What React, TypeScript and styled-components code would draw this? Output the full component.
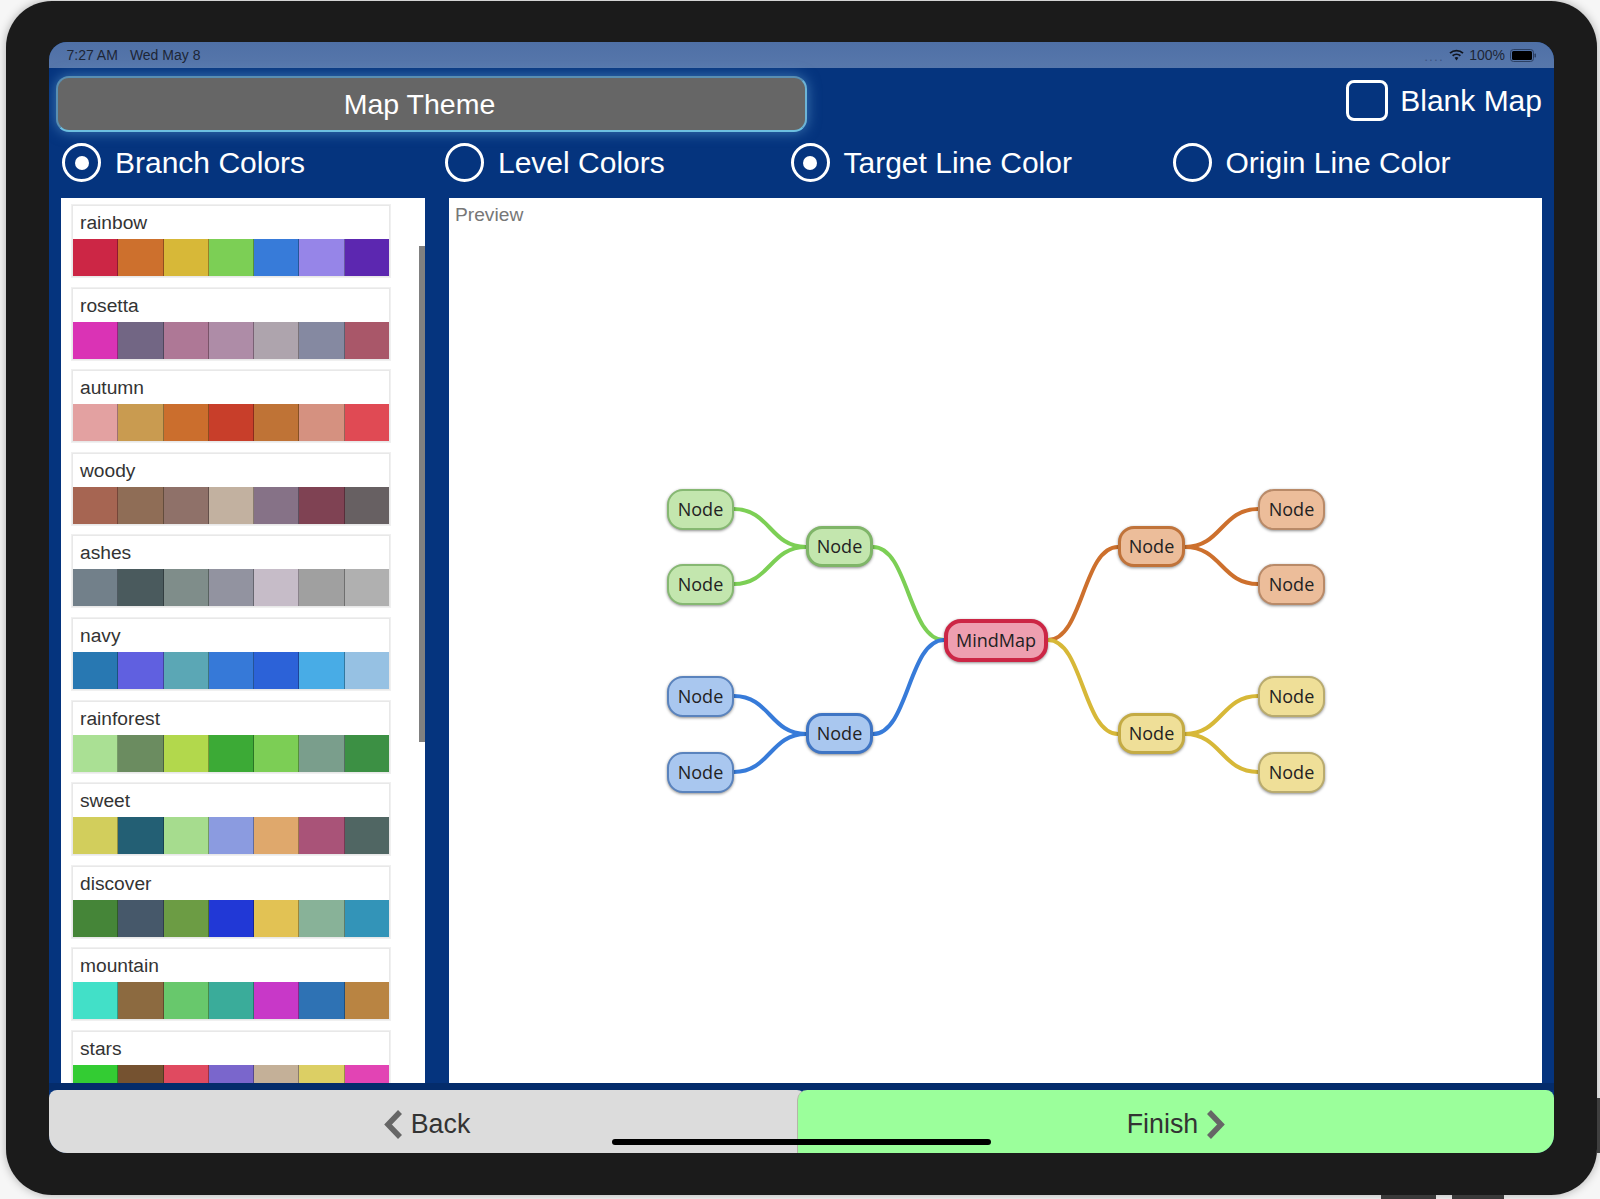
import React from "react";
import styled, { createGlobalStyle } from "styled-components";

const GlobalStyle = createGlobalStyle`
	html, body {
		margin: 0;
		padding: 0;
		background: #f6f6f6;
		font-family: "Liberation Sans", Arial, sans-serif;
	}
`;

const palettes = [
	{ name: "rainbow", colors: ["#cc2645", "#cd702d", "#d7b838", "#7ccf55", "#377bd9", "#9685e8", "#5c27b0"] },
	{ name: "rosetta", colors: ["#da33b5", "#726684", "#ae7896", "#ae8ca7", "#aea4ad", "#8589a1", "#a95769"] },
	{ name: "autumn", colors: ["#e3a1a1", "#c99b50", "#cb6e2d", "#c83e2a", "#bf7336", "#d59180", "#e04a54"] },
	{ name: "woody", colors: ["#a66552", "#8f6d56", "#8f7169", "#c2b1a0", "#867287", "#7f4253", "#676062"] },
	{ name: "ashes", colors: ["#72808a", "#4a5a5d", "#7f8d8a", "#9293a0", "#c6bcc8", "#a0a0a0", "#b0b0b0"] },
	{ name: "navy", colors: ["#2878b2", "#6060e0", "#5ba7b5", "#3679d8", "#2c62d8", "#48ace6", "#96c1e3"] },
	{ name: "rainforest", colors: ["#aae094", "#6b8c60", "#b2d84c", "#3caa36", "#7cce55", "#7a9e8c", "#3c9044"] },
	{ name: "sweet", colors: ["#d2ce5c", "#235f74", "#a6dc8e", "#8b9be0", "#dfa86c", "#a95378", "#506663"] },
	{ name: "discover", colors: ["#458538", "#46586a", "#6c9c44", "#2138d6", "#e2c254", "#88b298", "#3394b8"] },
	{ name: "mountain", colors: ["#42e0c8", "#8c6a40", "#68c86c", "#3aac9a", "#c838c8", "#2e72b4", "#b98442"] },
	{ name: "stars", colors: ["#33cc33", "#755230", "#e04a60", "#7a66cc", "#c4b098", "#dccf64", "#e244b4"] }
];

const radios = [
	{ label: "Branch Colors", checked: true },
	{ label: "Level Colors", checked: false },
	{ label: "Target Line Color", checked: true },
	{ label: "Origin Line Color", checked: false }
];

type Tone = "green" | "blue" | "orange" | "yellow" | "red";

const tones: Record<Tone, { fill: string; edge: string; line: string; rim: string }> = {
	green: { fill: "#c3e6ae", edge: "#86b872", line: "#7ccf55", rim: "#7fb568" },
	blue: { fill: "#a9c7ef", edge: "#5a83bd", line: "#377bd9", rim: "#3f75c4" },
	orange: { fill: "#ecbd9a", edge: "#b98a68", line: "#cd702d", rim: "#c0733a" },
	yellow: { fill: "#efdf98", edge: "#b9ab6e", line: "#d7b838", rim: "#c4ab44" },
	red: { fill: "#ee9fb0", edge: "#cc2645", line: "#cc2645", rim: "#c62340" }
};

const mapNodes: { x: number; y: number; tone: Tone; mid?: boolean }[] = [
	{ x: 217, y: 291, tone: "green" },
	{ x: 217, y: 366, tone: "green" },
	{ x: 356, y: 328, tone: "green", mid: true },
	{ x: 217, y: 478, tone: "blue" },
	{ x: 217, y: 554, tone: "blue" },
	{ x: 356, y: 515, tone: "blue", mid: true },
	{ x: 668, y: 328, tone: "orange", mid: true },
	{ x: 808, y: 291, tone: "orange" },
	{ x: 808, y: 366, tone: "orange" },
	{ x: 668, y: 515, tone: "yellow", mid: true },
	{ x: 808, y: 478, tone: "yellow" },
	{ x: 808, y: 554, tone: "yellow" }
];

const curve = (x1: number, y1: number, x2: number, y2: number) => {
	const mx = (x1 + x2) / 2;
	return `M${x1} ${y1} C${mx} ${y1} ${mx} ${y2} ${x2} ${y2}`;
};

const mapLines: { d: string; tone: Tone }[] = [
	{ d: curve(284, 311, 356, 349), tone: "green" },
	{ d: curve(284, 386, 356, 349), tone: "green" },
	{ d: curve(423, 349, 494, 442), tone: "green" },
	{ d: curve(284, 498, 356, 536), tone: "blue" },
	{ d: curve(284, 574, 356, 536), tone: "blue" },
	{ d: curve(423, 536, 494, 442), tone: "blue" },
	{ d: curve(598, 442, 668, 349), tone: "orange" },
	{ d: curve(735, 349, 808, 311), tone: "orange" },
	{ d: curve(735, 349, 808, 386), tone: "orange" },
	{ d: curve(598, 442, 668, 536), tone: "yellow" },
	{ d: curve(735, 536, 808, 498), tone: "yellow" },
	{ d: curve(735, 536, 808, 574), tone: "yellow" }
];

const Page = styled.div`
	position: relative;
	width: 1600px;
	height: 1199px;
	box-sizing: border-box;
	padding: 1px 3px 4px 6px;
	display: flex;
	overflow: hidden;
`;

const StandFoot = styled.div<{ $x: number; $w: number }>`
	position: absolute;
	left: ${p => p.$x}px;
	width: ${p => p.$w}px;
	bottom: 0;
	height: 4px;
	background: #3a3a3a;
`;

const SideEdge = styled.div`
	position: absolute;
	right: 0;
	top: 1098px;
	width: 3px;
	height: 55px;
	background: #3f3f3f;
`;

const Device = styled.div`
	flex: 1;
	display: flex;
	box-sizing: border-box;
	padding: 41px 43px 42px 43px;
	background: #1b1b1b;
	border-radius: 46px;
	box-shadow: 0 0 10px rgba(0, 0, 0, 0.3);
`;

const Screen = styled.div`
	position: relative;
	flex: 1;
	display: flex;
	flex-direction: column;
	overflow: hidden;
	border-radius: 18px;
	background: #05347e;
`;

const StatusBar = styled.div`
	height: 26px;
	flex: none;
	display: flex;
	align-items: center;
	justify-content: space-between;
	padding: 0 18px 0 17.5px;
	background: linear-gradient(#4f70a6, #5777ab);
	color: #1d2636;
	font-size: 14px;
`;

const StatusGroup = styled.div`
	display: flex;
	align-items: center;
	gap: 12px;
`;

const StatusRight = styled(StatusGroup)`
	gap: 5px;
`;

const Signal = styled.span`
	color: #3a5280;
	font-size: 12px;
	letter-spacing: 1.6px;
	padding-top: 3px;
`;

const Header = styled.div`
	flex: none;
	height: 56px;
	margin-top: 8px;
	display: flex;
	justify-content: space-between;
	padding: 0 12px 0 7px;
`;

const TitleBar = styled.div`
	width: 751px;
	box-sizing: border-box;
	display: flex;
	align-items: center;
	justify-content: center;
	padding-right: 24px;
	background: #666666;
	border: 2px solid #5a8fb2;
	border-bottom-color: #6dbfe0;
	border-right-color: #6db4d6;
	border-radius: 13px;
	box-shadow: 0 0 14px rgba(120, 190, 235, 0.5);
	color: #ffffff;
	font-size: 28.5px;
`;

const BlankToggle = styled.div`
	display: flex;
	align-items: flex-start;
	gap: 12px;
	padding-top: 4px;
	color: #ffffff;
	font-size: 30px;
	line-height: 41px;
`;

const CheckBox = styled.div`
	width: 42px;
	height: 41px;
	box-sizing: border-box;
	border: 3px solid #ffffff;
	border-radius: 8px;
`;

const RadioRow = styled.div`
	flex: none;
	height: 39px;
	margin-top: 11px;
	padding-left: 13px;
	display: grid;
	grid-template-columns: 383px 345.5px 382px 1fr;
`;

const RadioItem = styled.div`
	display: flex;
	align-items: center;
	gap: 14px;
	color: #ffffff;
	font-size: 30px;
`;

const RadioCircle = styled.div<{ $checked: boolean }>`
	width: 39px;
	height: 39px;
	flex: none;
	box-sizing: border-box;
	border: 3px solid #ffffff;
	border-radius: 50%;
	display: flex;
	align-items: center;
	justify-content: center;
	&::after {
		content: "";
		display: ${p => (p.$checked ? "block" : "none")};
		width: 14px;
		height: 14px;
		border-radius: 50%;
		background: #ffffff;
	}
`;

const Content = styled.div`
	flex: 1;
	min-height: 0;
	margin-top: 16px;
	padding: 0 12px 0 12px;
	display: flex;
	gap: 24px;
`;

const ListPanel = styled.div`
	position: relative;
	width: 364px;
	flex: none;
	box-sizing: border-box;
	padding: 7px 0 0 11px;
	overflow: hidden;
	background: #ffffff;
	display: flex;
	flex-direction: column;
	gap: 10.6px;
`;

const ScrollThumb = styled.div`
	position: absolute;
	top: 48px;
	right: 0.5px;
	width: 6px;
	height: 496px;
	background: #808080;
`;

const PaletteCard = styled.div`
	width: 318px;
	flex: none;
	box-sizing: border-box;
	height: 72px;
	outline: 1px solid #f0f0f0;
	border: 1px solid #e8e8e8;
	background: #ffffff;
`;

const PaletteName = styled.div`
	height: 33px;
	padding-left: 7px;
	color: #333333;
	font-size: 19.2px;
	line-height: 33px;
`;

const SwatchRow = styled.div`
	display: flex;
	height: 37px;
	box-shadow: inset 0 0 0 1px rgba(0, 0, 0, 0.15);
`;

const Swatch = styled.div<{ $color: string }>`
	flex: 1;
	background: ${p => p.$color};
	border-right: 1px solid rgba(0, 0, 0, 0.3);
	&:last-child {
		border-right: 0;
	}
`;

const PreviewPanel = styled.div`
	position: relative;
	flex: 1;
	background: #ffffff;
`;

const PreviewLabel = styled.div`
	padding: 6px 0 0 6px;
	color: #777777;
	font-size: 19.2px;
`;

const MapCanvas = styled.div`
	position: absolute;
	left: 1px;
	top: 0;
	right: 0;
	bottom: 0;
`;

const MapLines = styled.svg`
	position: absolute;
	left: 0;
	top: 0;
	width: 100%;
	height: 100%;
`;

const MapNode = styled.div<{ $x: number; $y: number; $tone: Tone; $mid?: boolean }>`
	position: absolute;
	left: ${p => p.$x}px;
	top: ${p => p.$y}px;
	width: 67px;
	height: 41px;
	box-sizing: border-box;
	display: flex;
	align-items: center;
	justify-content: center;
	padding-bottom: 2px;
	background: ${p => tones[p.$tone].fill};
	border: ${p => (p.$mid ? 3 : 2)}px solid ${p => (p.$mid ? tones[p.$tone].rim : tones[p.$tone].edge)};
	border-radius: 16px;
	box-shadow: 0 1px 3px rgba(0, 0, 0, 0.45);
	color: #222222;
	font-family: "Open Sans", "Liberation Sans", sans-serif;
	font-size: 18px;
`;

const RootNode = styled(MapNode)`
	width: 104px;
	height: 43px;
	border-width: 4px;
	border-radius: 17px;
`;

const Strip = styled.div`
	flex: none;
	height: 7px;
	background: #042c6b;
`;

const Footer = styled.div`
	flex: none;
	height: 63px;
	display: flex;
	color: #333333;
	font-size: 26.8px;
`;

const BackButton = styled.div`
	width: 756px;
	flex: none;
	display: flex;
	align-items: center;
	justify-content: center;
	gap: 8px;
	padding-top: 5px;
	box-sizing: border-box;
	background: #dcdcdc;
	border-radius: 8px 8px 0 0;
`;

const FinishButton = styled.div`
	flex: 1;
	margin-left: -8px;
	display: flex;
	align-items: center;
	justify-content: center;
	gap: 8px;
	padding-top: 5px;
	background: #9bff9b;
	border-left: 1px solid #b5b5a8;
	border-radius: 10px 8px 0 0;
	z-index: 1;
`;

const HomeBar = styled.div`
	position: absolute;
	left: 563px;
	bottom: 8px;
	width: 379px;
	height: 6px;
	border-radius: 3px;
	background: #000000;
	z-index: 2;
`;

const Chevron = ({ flip }: { flip?: boolean }) => (
	<svg width="19" height="29" viewBox="0 0 19 29">
		<path
			d={flip ? "M3 2 L15 14.5 L3 27" : "M16 2 L4 14.5 L16 27"}
			fill="none"
			stroke="#666666"
			strokeWidth="5.5"
		/>
	</svg>
);

const WifiIcon = () => (
	<svg width="15" height="12" viewBox="0 0 15 12">
		<path d="M1 4.2 A9.5 9.5 0 0 1 14 4.2" fill="none" stroke="#10151f" strokeWidth="1.8" />
		<path d="M3.6 6.8 A6 6 0 0 1 11.4 6.8" fill="none" stroke="#10151f" strokeWidth="1.8" />
		<path d="M5.6 8.8 L7.5 11.5 L9.4 8.8 A3 3 0 0 0 5.6 8.8 Z" fill="#10151f" />
	</svg>
);

const BatteryIcon = () => (
	<svg width="26" height="13" viewBox="0 0 26 13">
		<rect x="0.5" y="0.5" width="23" height="12" rx="3" fill="none" stroke="#2b3f62" />
		<rect x="2" y="2" width="20" height="9" rx="1.5" fill="#000000" />
		<rect x="24.5" y="4.5" width="1.5" height="4" rx="0.7" fill="#2b3f62" />
	</svg>
);

export default function App() {
	return (
		<>
			<GlobalStyle />
			<Page>
				<Device>
					<Screen>
						<StatusBar>
							<StatusGroup>
								<span>7:27 AM</span>
								<span>Wed May 8</span>
							</StatusGroup>
							<StatusRight>
								<Signal>....</Signal>
								<WifiIcon />
								<span>100%</span>
								<BatteryIcon />
							</StatusRight>
						</StatusBar>
						<Header>
							<TitleBar>Map Theme</TitleBar>
							<BlankToggle>
								<CheckBox />
								<span>Blank Map</span>
							</BlankToggle>
						</Header>
						<RadioRow>
							{radios.map(r => (
								<RadioItem key={r.label}>
									<RadioCircle $checked={r.checked} />
									<span>{r.label}</span>
								</RadioItem>
							))}
						</RadioRow>
						<Content>
							<ListPanel>
								{palettes.map(p => (
									<PaletteCard key={p.name}>
										<PaletteName>{p.name}</PaletteName>
										<SwatchRow>
											{p.colors.map((c, i) => (
												<Swatch key={i} $color={c} />
											))}
										</SwatchRow>
									</PaletteCard>
								))}
								<ScrollThumb />
							</ListPanel>
							<PreviewPanel>
								<PreviewLabel>Preview</PreviewLabel>
								<MapCanvas>
									<MapLines>
										{mapLines.map((l, i) => (
											<path key={i} d={l.d} fill="none" stroke={tones[l.tone].line} strokeWidth="4" />
										))}
									</MapLines>
									{mapNodes.map((n, i) => (
										<MapNode key={i} $x={n.x} $y={n.y} $tone={n.tone} $mid={n.mid}>
											Node
										</MapNode>
									))}
									<RootNode $x={494} $y={421} $tone="red">
										MindMap
									</RootNode>
								</MapCanvas>
							</PreviewPanel>
						</Content>
						<Strip />
						<Footer>
							<BackButton>
								<Chevron />
								<span>Back</span>
							</BackButton>
							<FinishButton>
								<span>Finish</span>
								<Chevron flip />
							</FinishButton>
						</Footer>
						<HomeBar />
					</Screen>
				</Device>
				<StandFoot $x={1381} $w={55} />
				<StandFoot $x={1452} $w={52} />
				<SideEdge />
			</Page>
		</>
	);
}
